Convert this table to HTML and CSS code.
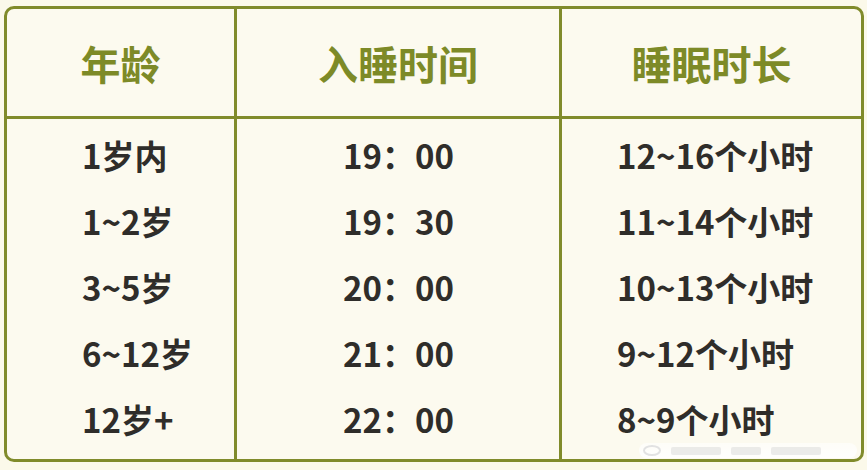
FILE: index.html
```html
<!DOCTYPE html>
<html lang="zh">
<head>
<meta charset="utf-8">
<link rel="stylesheet" href="styles.css">
</head>
<body>
<div class="sheet">
  <div class="col col-age">
    <div class="head">年龄</div>
    <div class="body">
      <div class="cell">1岁内</div>
      <div class="cell">1~2岁</div>
      <div class="cell">3~5岁</div>
      <div class="cell">6~12岁</div>
      <div class="cell">12岁+</div>
    </div>
  </div>
  <div class="col col-time">
    <div class="head">入睡时间</div>
    <div class="body">
      <div class="cell">19：00</div>
      <div class="cell">19：30</div>
      <div class="cell">20：00</div>
      <div class="cell">21：00</div>
      <div class="cell">22：00</div>
    </div>
  </div>
  <div class="col col-dur">
    <div class="head">睡眠时长</div>
    <div class="body">
      <div class="cell">12~16个小时</div>
      <div class="cell">11~14个小时</div>
      <div class="cell">10~13个小时</div>
      <div class="cell">9~12个小时</div>
      <div class="cell">8~9个小时</div>
    </div>
  </div>
  <div class="watermark" aria-hidden="true"><span class="wm-logo"></span><span class="wm-bar"></span><span class="wm-bar short"></span><span class="wm-bar"></span></div>
</div>
</body>
</html>
```
FILE: styles.css
```css
html, body {
  margin: 0;
  padding: 0;
  background: #fbf9ea;
}
body {
  font-family: "Noto Sans CJK SC", "Noto Sans", sans-serif;
  padding: 6px 3px 0 4px;
}
.sheet {
  position: relative;
  width: 860px;
  height: 456px;
  box-sizing: border-box;
  border: 3px solid #808b2b;
  border-radius: 10px;
  background: #fcfaef;
  display: grid;
  grid-template-columns: 227px 325px 1fr;
  overflow: hidden;
}
.col {
  display: flex;
  flex-direction: column;
}
.col-time, .col-dur {
  border-left: 3px solid #808b2b;
}
.head {
  height: 107px;
  border-bottom: 3px solid #808b2b;
  display: flex;
  align-items: center;
  justify-content: center;
  font-size: 40px;
  font-weight: 700;
  color: #7d8a27;
}
.body {
  padding: 3px 0 6px;
  display: flex;
  flex-direction: column;
}
.cell {
  height: 66px;
  display: flex;
  align-items: center;
  font-size: 33px;
  font-weight: 700;
  color: #2f2d2a;
}
.col-age .cell {
  padding-left: 75px;
}
.col-time .cell {
  padding-left: 106px;
}
.col-dur .cell {
  padding-left: 55px;
}
.watermark {
  position: absolute;
  right: 4px;
  bottom: 1px;
  width: 218px;
  height: 15px;
  border-radius: 8px;
  background: linear-gradient(to bottom, rgba(255,255,255,0.55), rgba(255,255,255,0.9));
  display: flex;
  align-items: center;
  gap: 10px;
  padding-left: 4px;
  box-sizing: border-box;
}
.wm-logo {
  width: 18px;
  height: 11px;
  border: 2px solid #e2e2e2;
  border-radius: 50%;
  box-sizing: border-box;
}
.wm-bar {
  width: 50px;
  height: 8px;
  border-radius: 2px;
  background: rgba(200, 200, 200, 0.35);
}
.wm-bar.short {
  width: 30px;
}
```
